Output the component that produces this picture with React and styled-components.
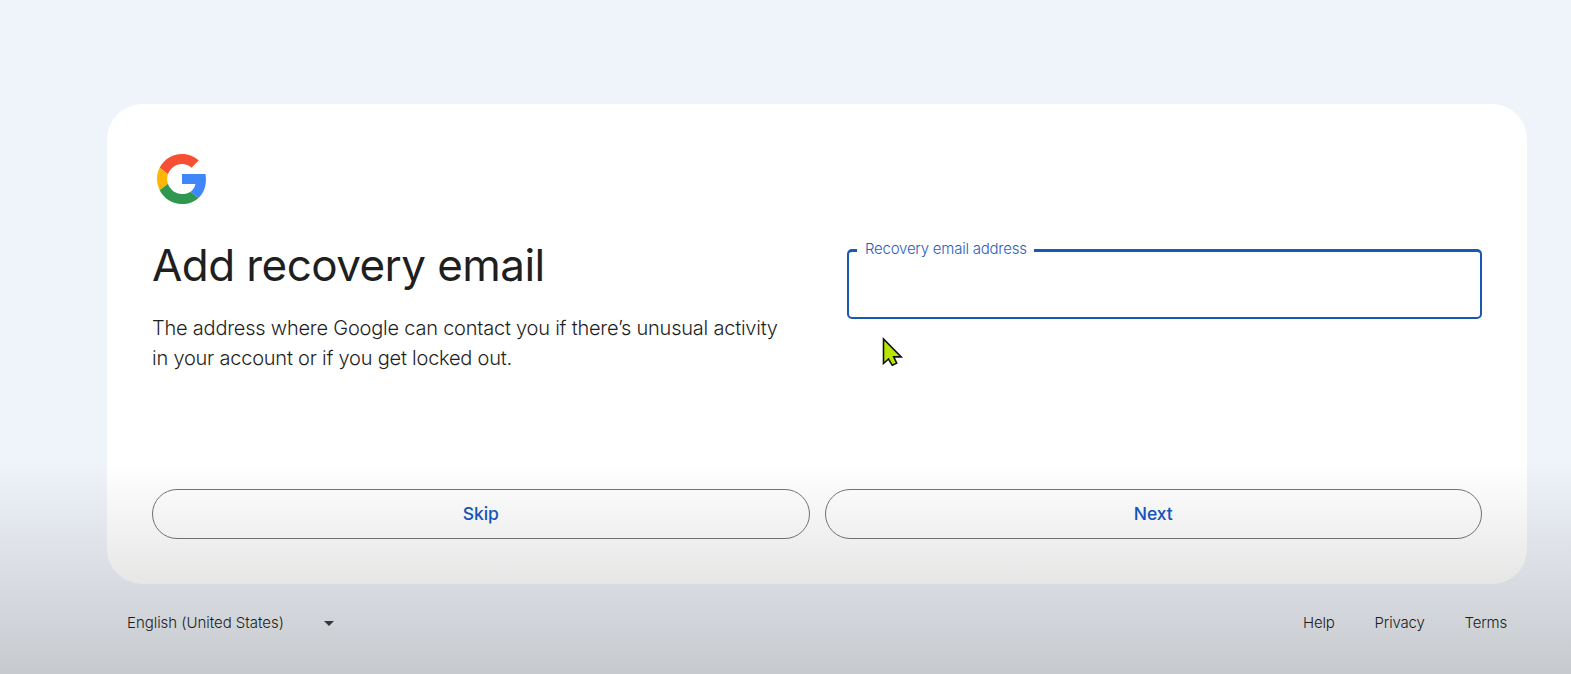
import React from "react";
import styled, { createGlobalStyle } from "styled-components";

const GlobalStyle = createGlobalStyle`
  *, *::before, *::after { box-sizing: border-box; }
  body {
    margin: 0;
    background: #eff3fa;
    color: #1f1f1f;
    font-family: Inter, Roboto, "Liberation Sans", sans-serif;
  }
`;

const Page = styled.div`
  position: relative;
  height: 674px;
  overflow: hidden;
  padding: 104px 44px 0 107px;
`;

const Shade = styled.div`
  position: absolute;
  inset: 462px 0 0 0;
  background: linear-gradient(rgba(10, 12, 5, 0), rgba(10, 12, 5, 0.175));
  pointer-events: none;
`;

const Card = styled.main`
  display: flex;
  flex-direction: column;
  height: 480px;
  padding: 45px;
  border-radius: 35px;
  background: #fff;
`;

const Logo = styled.svg`
  display: block;
  width: 60px;
  height: 60px;
  padding: 5px;
`;

const Columns = styled.div`
  display: grid;
  grid-template-columns: repeat(2, minmax(0, 1fr));
  gap: 60px;
  flex: 1;
`;

const Title = styled.h1`
  margin: 29px 0 0;
  font-size: 44px;
  font-weight: 380;
  line-height: 55px;
  letter-spacing: -0.57px;
  white-space: nowrap;
`;

const Description = styled.p`
  margin: 20px 0 0;
  font-size: 20px;
  font-weight: 350;
  line-height: 30px;
  letter-spacing: -0.22px;
  white-space: nowrap;
`;

const Field = styled.fieldset`
  min-width: 0;
  height: 80px;
  margin: 30px 0 0;
  padding: 0 0 0 8px;
  border: 2px solid #1a58b8;
  border-top-width: 3px;
  border-radius: 5px;
`;

const FieldLabel = styled.legend`
  width: 177px;
  height: 23px;
  padding: 0 8px;
  color: #2a5dc0;
  font-size: 15px;
  font-weight: 350;
  line-height: 20px;
  letter-spacing: -0.23px;
  white-space: nowrap;
`;

const Input = styled.input`
  width: 100%;
  height: 50px;
  padding: 0 8px;
  border: 0;
  outline: 0;
  background: transparent;
  font: inherit;
`;

const Actions = styled.div`
  display: grid;
  grid-template-columns: 1fr 1fr;
  gap: 15px;
`;

const Button = styled.button`
  height: 50px;
  padding: 0 0 2px;
  border: 1px solid #747775;
  border-radius: 25px;
  background: transparent;
  color: #1457c4;
  font: 480 17.5px/25px Inter, Roboto, sans-serif;
  letter-spacing: -0.1px;
`;

const Footer = styled.footer`
  display: flex;
  justify-content: space-between;
  align-items: center;
  padding: 26px 20px 0;
  font-size: 15px;
  font-weight: 350;
  line-height: 25px;
  letter-spacing: -0.04px;
`;

const Language = styled.div`
  display: flex;
  align-items: center;
  justify-content: space-between;
  width: 207px;
  white-space: nowrap;
`;

const Caret = styled.svg`
  width: 10px;
  height: 5px;
  margin-top: 1px;
`;

const Links = styled.nav`
  display: flex;
  gap: 40px;
  letter-spacing: -0.2px;
`;

const Link = styled.a`
  color: inherit;
  text-decoration: none;
`;

const Pointer = styled.svg`
  position: absolute;
  left: 880px;
  top: 335px;
  width: 25px;
  height: 34px;
`;

export default function App() {
  return (
    <>
      <GlobalStyle />
      <Page>
        <Card>
          <Logo viewBox="0 0 48 48">
            <path fill="#f74f33" d="M24 9.5c3.54 0 6.71 1.22 9.21 3.6l6.85-6.85C35.9 2.38 30.47 0 24 0 14.62 0 6.51 5.38 2.56 13.22l7.98 6.19C12.43 13.72 17.74 9.5 24 9.5z" />
            <path fill="#3f86fb" d="M46.98 24.55c0-1.9-.15-3.6-.38-5.25H24v9.52h12.94c-.58 2.96-2.26 5.68-4.78 7.38l7.73 6c4.51-4.18 7.09-10.36 7.09-17.65z" />
            <path fill="#fdb606" d="M10.53 28.59c-.48-1.45-.76-2.99-.76-4.59s.27-3.14.76-4.59l-7.98-6.19C.92 16.46 0 20.12 0 24c0 3.88.92 7.54 2.56 10.78l7.97-6.19z" />
            <path fill="#2f974f" d="M24 48c6.48 0 11.93-2.13 15.89-5.81l-7.73-6c-2.15 1.45-4.92 2.3-8.16 2.3-6.26 0-11.57-4.22-13.47-9.91l-7.98 6.19C6.51 42.62 14.62 48 24 48z" />
          </Logo>
          <Columns>
            <div>
              <Title>Add recovery email</Title>
              <Description>
                The address where Google can contact you if there’s unusual activity
                <br />
                in your account or if you get locked out.
              </Description>
            </div>
            <Field>
              <FieldLabel>Recovery email address</FieldLabel>
              <Input type="email" aria-label="Recovery email address" />
            </Field>
          </Columns>
          <Actions>
            <Button>Skip</Button>
            <Button>Next</Button>
          </Actions>
        </Card>
        <Footer>
          <Language>
            <span>English (United States)</span>
            <Caret viewBox="0 0 10 5"><path fill="#3c4043" d="M0 0h10L5 5z" /></Caret>
          </Language>
          <Links>
            <Link>Help</Link>
            <Link>Privacy</Link>
            <Link>Terms</Link>
          </Links>
        </Footer>
        <Shade />
        <Pointer viewBox="0 0 25 34">
          <path d="M3.5 4v24.5l5-4.5 3.8 6.3 4.4-2.2-3-6.2h7.5z" fill="#b9e600" stroke="#111" strokeWidth="1.6" />
        </Pointer>
      </Page>
    </>
  );
}
